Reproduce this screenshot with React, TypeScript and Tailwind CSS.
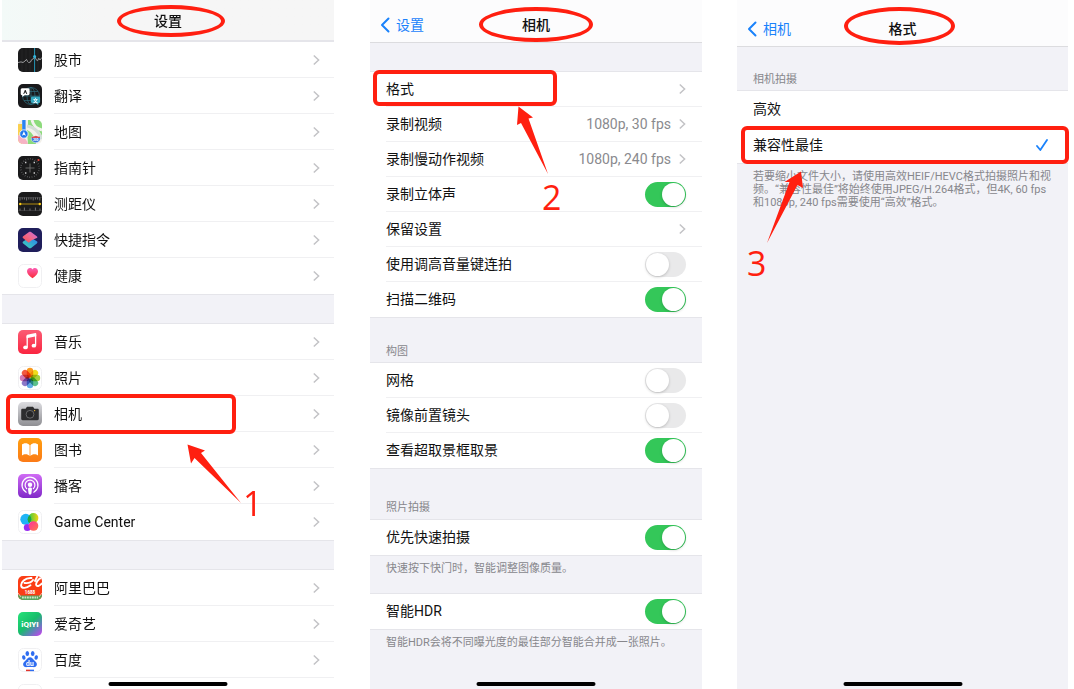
import { ReactNode, useState } from 'react'

interface App {
  name: string
  icon: ReactNode
  marked?: boolean
}

interface Setting {
  name: string
  value?: string
  on?: boolean
  marked?: boolean
}

const Tile = ({ fill, children }: { fill: string; children?: ReactNode }) => (
  <svg viewBox="0 0 24 24" className="size-6 shrink-0 overflow-hidden rounded-[5px]" aria-hidden="true">
    <rect width="24" height="24" fill={fill} />
    {children}
  </svg>
)

const WhiteTile = ({ children }: { children?: ReactNode }) => (
  <svg viewBox="0 0 24 24" className="size-6 shrink-0" aria-hidden="true">
    <rect x=".5" y=".5" width="23" height="23" rx="5" fill="#fff" stroke="#f0f0f2" />
    {children}
  </svg>
)

const StocksIcon = () => (
  <Tile fill="#1b1b1c">
    <path d="M4 0v24M8 0v24M12 0v24M20 0v24" stroke="#2c2c2e" strokeWidth=".6" />
    <path d="M0 14.5l3-.6 2 .6 2-1.5 1.5-1.6 1 2 1.2 1.2 1.8-.6 1.2-2.4 1.6-.8L17 8.5l1 3 1.6 1.2 1.2-2.4L22 12l2-2.6" fill="none" stroke="#b9b9bb" strokeWidth=".8" />
    <path d="M16.6 0v24" stroke="#2596b5" strokeWidth="1" />
    <circle cx="16.6" cy="8.6" r="1.5" fill="#36b5dc" />
  </Tile>
)

const TranslateIcon = () => (
  <Tile fill="#19191b">
    <g fill="none" stroke="#2f6f80" strokeWidth=".7">
      <circle cx="13" cy="12" r="8.5" />
      <ellipse cx="13" cy="12" rx="4" ry="8.5" />
      <path d="M13 3.5v17M4.5 12h17M6 7.5h14M6 16.5h14" />
    </g>
    <path d="M4 4.2h6.2a1.4 1.4 0 011.4 1.4v4.2a1.4 1.4 0 01-1.4 1.4H6.6L4.3 13v-1.8H4a1.3 1.3 0 01-1.3-1.4V5.6A1.4 1.4 0 014 4.2z" fill="#fff" />
    <text x="7.2" y="9.9" textAnchor="middle" fontSize="6" fontWeight="700" fill="#222">A</text>
    <path d="M14.4 12.6h6.3a1.4 1.4 0 011.4 1.4v3.8a1.4 1.4 0 01-1.4 1.4h-.4v2l-2.4-2h-3.5a1.4 1.4 0 01-1.4-1.4V14a1.4 1.4 0 011.4-1.4z" fill="#35a8c0" />
    <text x="17.5" y="18" textAnchor="middle" fontSize="5" fontWeight="700" fill="#fff">文</text>
  </Tile>
)

const MapsIcon = () => (
  <Tile fill="#f2f0ea">
    <path d="M10 0h14v17C22 9 16 6 10 5z" fill="#8ddb7c" />
    <path d="M14 0c1 5 5 9 10 10" fill="none" stroke="#f4f3ef" strokeWidth="3" />
    <path d="M0 4h4v20H0z" fill="#fbd04f" />
    <path d="M0 15c5 1 9 4 10 9H0z" fill="#f6b3c4" />
    <path d="M9 6c7 1 12 6 15 13" fill="none" stroke="#d3dcd6" strokeWidth="3" />
    <path d="M9 10c5 2 8 7 9 14h-8z" fill="#8ddb7c" />
    <path d="M4.2 0h3.4v11H4.2z" fill="#2a82f2" />
    <circle cx="5.9" cy="14" r="4.2" fill="#1f78ee" stroke="#fff" strokeWidth=".8" />
    <path d="M5.9 11.2l2 4.6-2-1-2 1z" fill="#fff" />
    <path d="M14 16.5c1.5.6 2.5 0 3.8-.6 1.3.6 2.3 1.2 3.8.6 1.7 3 .2 5.5-3.8 6.300-4-.8-5.500-3.300-3.800-6.300z" fill="#3c7ae0" stroke="#fff" strokeWidth=".5" />
    <path d="M14 16.400c1.500.6 2.500 0 3.800-.6 1.300.6 2.300 1.200 3.800.6l.5 1.500h-8.600z" fill="#e14a4a" />
    <text x="17.800" y="21.300" textAnchor="middle" fontSize="3" fontWeight="700" fill="#fff">280</text>
  </Tile>
)

const CompassIcon = () => (
  <Tile fill="#1a1a1b">
    <circle cx="12" cy="12" r="9.200" fill="none" stroke="#747476" strokeWidth="1.400" strokeDasharray=".6 1.800" />
    <path d="M12 7.500v9M7.500 12h9" stroke="#6f6f71" strokeWidth=".9" />
    <path d="M7 6.500h1.400M15.600 6.500H17M7 17h1.400M15.600 17H17" stroke="#cfcfd1" strokeWidth="1.400" />
    <circle cx="20.500" cy="4" r="1.100" fill="#f04438" />
  </Tile>
)

const MeasureIcon = () => (
  <Tile fill="#1b1b1c">
    <path d="M0 5.500h24M0 18.500h24" stroke="#4a4a4c" strokeWidth=".6" />
    <path d="M2 5.500v3M4.200 5.500v2M6.400 5.500v2M8.600 5.500v3M10.800 5.500v2M13 5.500v2M15.200 5.500v3M17.400 5.500v2M19.600 5.500v2M21.800 5.500v3M6.400 18.500v-3M12 18.500v-2M17.400 18.500v-3M2 18.500v-2M22 18.500v-2" stroke="#9a9a9c" strokeWidth=".7" />
    <path d="M2 12h20" stroke="#d8a80e" strokeWidth=".8" />
    <circle cx="2.200" cy="12" r="1.200" fill="#ffcf1a" />
    <circle cx="21.800" cy="12" r="1.200" fill="#ffcf1a" />
  </Tile>
)

const ShortcutsIcon = () => (
  <Tile fill="#1f1e5b">
    <defs>
      <linearGradient id="sc-top" x1="0" y1="1" x2="1" y2="0">
        <stop offset="0" stopColor="#f2504f" />
        <stop offset=".5" stopColor="#f0688c" />
        <stop offset="1" stopColor="#c56ae8" />
      </linearGradient>
      <linearGradient id="sc-bottom" x1="0" y1="1" x2="1" y2="0">
        <stop offset="0" stopColor="#3fd6b4" />
        <stop offset="1" stopColor="#2b7cf0" />
      </linearGradient>
    </defs>
    <path d="M12 9l6.800 4.300c.9.600.9 1.500 0 2.100l-5.700 4.500c-.8.600-1.400.600-2.200 0l-5.700-4.400c-.8-.600-.8-1.500 0-2.100z" fill="url(#sc-bottom)" />
    <path d="M11 4L5.200 8.300c-.8.600-.8 1.400 0 2l5.500 4.400 3-2.400 5-2.200c.9-.600.9-1.300 0-1.900L13 4c-.7-.5-1.300-.5-2 0z" fill="url(#sc-top)" />
  </Tile>
)

const HealthIcon = () => (
  <WhiteTile>
    <defs>
      <linearGradient id="heart" x1="0" y1="0" x2="0" y2="1">
        <stop offset="0" stopColor="#fb5fb4" />
        <stop offset="1" stopColor="#fb2b37" />
      </linearGradient>
    </defs>
    <path d="M14.500 14.200C11 11.800 9 9.700 9 7.300 9 5.300 10.300 4 12 4c1 0 1.900.5 2.500 1.400C15.100 4.500 16 4 17 4c1.700 0 3 1.300 3 3.300 0 2.400-2 4.500-5.500 6.900z" fill="url(#heart)" />
  </WhiteTile>
)

const MusicIcon = () => (
  <Tile fill="url(#music)">
    <defs>
      <linearGradient id="music" x1="0" y1="0" x2="0" y2="1">
        <stop offset="0" stopColor="#fb5c74" />
        <stop offset="1" stopColor="#fa2540" />
      </linearGradient>
    </defs>
    <path d="M9.200 6v11.200M17.600 4.500v11" stroke="#fff" strokeWidth="1.300" />
    <path d="M8.550 5.600c0-.5.200-.7.700-.8l8.200-1.700c.5-.1.800.1.800.6v2.600L8.550 8.300z" fill="#fff" />
    <ellipse cx="7.500" cy="17.400" rx="2.300" ry="1.900" fill="#fff" />
    <ellipse cx="15.900" cy="15.700" rx="2.300" ry="1.900" fill="#fff" />
  </Tile>
)

const petals = ['#fb9a1f', '#f0dc1c', '#a5cf3c', '#5cc08c', '#62ace6', '#8b78c8', '#d27ab4', '#f25a40']

const PhotosIcon = () => (
  <WhiteTile>
    <g className="isolate">
      {petals.map((color, i) => (
        <rect key={color} x="8.800" y="1.800" width="6.400" height="9.800" rx="3.200" fill={color} className="mix-blend-multiply" transform={`rotate(${i * 45} 12 12)`} />
      ))}
    </g>
  </WhiteTile>
)

const CameraIcon = () => (
  <Tile fill="url(#camera)">
    <defs>
      <linearGradient id="camera" x1="0" y1="0" x2="0" y2="1">
        <stop offset="0" stopColor="#dcdce0" />
        <stop offset="1" stopColor="#8f8f93" />
      </linearGradient>
    </defs>
    <path d="M4.600 6.800h3l1-1.600c.2-.4.500-.5.900-.5h5c.4 0 .7.100.9.500l1 1.600h3c.9 0 1.400.5 1.400 1.400v8.600c0 .9-.5 1.400-1.400 1.400H4.600c-.9 0-1.400-.5-1.400-1.400V8.200c0-.9.500-1.400 1.400-1.400z" fill="#2d2d2f" />
    <circle cx="12" cy="12.300" r="3.900" fill="#262628" stroke="#77777a" strokeWidth=".8" />
    <circle cx="16.600" cy="8.600" r=".7" fill="#f5b62a" />
  </Tile>
)

const BooksIcon = () => (
  <Tile fill="url(#books)">
    <defs>
      <linearGradient id="books" x1="0" y1="0" x2="0" y2="1">
        <stop offset="0" stopColor="#ff9f0f" />
        <stop offset="1" stopColor="#fb7a17" />
      </linearGradient>
    </defs>
    <path d="M11.600 7.300C10.500 5.700 9 5.200 7.600 5.200 6 5.200 4.600 5.800 4 6.600v10.800c.9-.7 2.200-1.100 3.600-1.100 1.600 0 3.100.5 4 1.600zM12.400 7.300c1.100-1.600 2.600-2.100 4-2.100 1.600 0 3 .6 3.600 1.400v10.800c-.9-.7-2.200-1.100-3.600-1.100-1.600 0-3.100.5-4 1.600z" fill="#fff" />
  </Tile>
)

const PodcastsIcon = () => (
  <Tile fill="url(#podcasts)">
    <defs>
      <linearGradient id="podcasts" x1="0" y1="0" x2="0" y2="1">
        <stop offset="0" stopColor="#d06cf5" />
        <stop offset="1" stopColor="#8028c8" />
      </linearGradient>
    </defs>
    <g fill="none" stroke="#fff" strokeWidth="1.200" strokeLinecap="round">
      <path d="M8.200 18.200a8 8 0 117.600 0" />
      <path d="M8.700 14.700a4.900 4.900 0 116.600 0" />
    </g>
    <circle cx="12" cy="10.800" r="2.200" fill="#fff" />
    <path d="M10 14.800c.2-1.600 3.800-1.600 4 0l-.6 4.700c-.3 1.500-2.500 1.500-2.800 0z" fill="#fff" />
  </Tile>
)

const GameCenterIcon = () => (
  <WhiteTile>
    <defs>
      <linearGradient id="gc-green" x1="0" y1="0" x2="1" y2="0">
        <stop offset="0" stopColor="#35c93c" />
        <stop offset="1" stopColor="#f4d414" />
      </linearGradient>
      <linearGradient id="gc-pink" x1="0" y1="0" x2="1" y2="1">
        <stop offset="0" stopColor="#ff2f9f" />
        <stop offset="1" stopColor="#ff7a45" />
      </linearGradient>
    </defs>
    <circle cx="15.400" cy="8" r="5" fill="url(#gc-green)" />
    <circle cx="7.800" cy="9.300" r="5.500" fill="#1fb4f5" />
    <path d="M11.600 5.300a5.500 5.500 0 010 8 5 5 0 010-8z" fill="#1fa83c" />
    <circle cx="9.300" cy="17.500" r="3.500" fill="#9a2cf0" />
    <circle cx="15.500" cy="16" r="4.800" fill="url(#gc-pink)" />
  </WhiteTile>
)

const AlibabaIcon = () => (
  <Tile fill="#fb3d15">
    <path d="M13.500 2C7 1.500 2.500 6.500 3.200 10c.6 2.900 5 2.400 9.300-.8M6.500 7c3.800.4 7-.8 8.500-3M23.500 2c-2.500 0-6 4.500-5.300 7 .5 1.800 3.300 1.300 5.800-1.500M17 5L19.500 0" fill="none" stroke="#fff" strokeWidth="1.900" strokeLinecap="round" />
    <text x="12" y="17.600" textAnchor="middle" fontSize="4.500" fontWeight="800" fill="#fff">1688</text>
    <path d="M0 18.500l3 1h18l3-1V24H0z" fill="#57a35c" />
    <path d="M0 17l3 4M24 17l-3 4" stroke="#f9b7a4" strokeWidth="1" />
    <path d="M4 21.500h16" stroke="#c9e6c5" strokeWidth="2" strokeDasharray="1.800 .7" />
  </Tile>
)

const IqiyiIcon = () => (
  <Tile fill="url(#iqiyi)">
    <defs>
      <linearGradient id="iqiyi" x1=".1" y1="0" x2="1" y2="1">
        <stop offset="0" stopColor="#25df78" />
        <stop offset=".45" stopColor="#17bd6b" />
        <stop offset=".7" stopColor="#5f82b8" />
        <stop offset="1" stopColor="#d23bf5" />
      </linearGradient>
    </defs>
    <text x="12" y="14.600" textAnchor="middle" fontSize="8" fontWeight="800" fill="#fff">iQIYI</text>
  </Tile>
)

const BaiduIcon = () => (
  <WhiteTile>
    <g fill="#2f6df0">
      <ellipse cx="9.300" cy="5.400" rx="1.800" ry="2.500" />
      <ellipse cx="14.700" cy="5.400" rx="1.800" ry="2.500" />
      <ellipse cx="5.800" cy="9.500" rx="1.700" ry="2.200" transform="rotate(-15 5.800 9.500)" />
      <ellipse cx="18.200" cy="9.500" rx="1.700" ry="2.200" transform="rotate(15 18.200 9.500)" />
      <path d="M12 9.200c2 0 2.700 1.500 3.900 2.800 1.400 1.300 3 2.300 3 4.300 0 2.300-2 3.100-4 2.800-2-.3-3.800-.3-5.800 0s-4-.5-4-2.800c0-2 1.600-3 3-4.300 1.200-1.300 1.900-2.800 3.900-2.800z" />
    </g>
    <text x="12" y="17.500" textAnchor="middle" fontSize="7" fontWeight="700" fill="#fff">du</text>
    <path d="M8 22.400h4" stroke="#e0362f" strokeWidth="1.500" />
    <path d="M12 22.400h4" stroke="#2f6df0" strokeWidth="1.500" />
  </WhiteTile>
)

const appGroups: App[][] = [
  [
    { name: '股市', icon: <StocksIcon /> },
    { name: '翻译', icon: <TranslateIcon /> },
    { name: '地图', icon: <MapsIcon /> },
    { name: '指南针', icon: <CompassIcon /> },
    { name: '测距仪', icon: <MeasureIcon /> },
    { name: '快捷指令', icon: <ShortcutsIcon /> },
    { name: '健康', icon: <HealthIcon /> },
  ],
  [
    { name: '音乐', icon: <MusicIcon /> },
    { name: '照片', icon: <PhotosIcon /> },
    { name: '相机', icon: <CameraIcon />, marked: true },
    { name: '图书', icon: <BooksIcon /> },
    { name: '播客', icon: <PodcastsIcon /> },
    { name: 'Game Center', icon: <GameCenterIcon /> },
  ],
  [
    { name: '阿里巴巴', icon: <AlibabaIcon /> },
    { name: '爱奇艺', icon: <IqiyiIcon /> },
    { name: '百度', icon: <BaiduIcon /> },
    { name: '', icon: <WhiteTile /> },
  ],
]

const videoSettings: Setting[] = [
  { name: '格式', marked: true },
  { name: '录制视频', value: '1080p, 30 fps' },
  { name: '录制慢动作视频', value: '1080p, 240 fps' },
  { name: '录制立体声', on: true },
  { name: '保留设置' },
  { name: '使用调高音量键连拍', on: false },
  { name: '扫描二维码', on: true },
]

const frameSettings: Setting[] = [
  { name: '网格', on: false },
  { name: '镜像前置镜头', on: false },
  { name: '查看超取景框取景', on: true },
]

const Chevron = () => (
  <svg viewBox="0 0 7 12" className="h-3 w-[7px] shrink-0" fill="none" stroke="#c3c3c6" strokeWidth="1.500" aria-hidden="true">
    <path d="M.8 1.500L5.600 6 .8 10.500" />
  </svg>
)

const HomeBar = () => (
  <div className="absolute bottom-[3px] left-1/2 h-1 w-[119px] -translate-x-1/2 rounded-full bg-black" />
)

// Ellipse rouge autour du titre
const Ring = ({ className }: { className: string }) => (
  <span className={`absolute rounded-[50%] border-4 border-[#ff1f10] ${className}`} />
)

// Cadre rouge autour d'une ligne
const Frame = ({ className }: { className: string }) => (
  <span className={`pointer-events-none absolute z-10 rounded-md border-4 border-[#ff1f10] ${className}`} />
)

const Arrow = ({ points, className }: { points: string; className: string }) => (
  <svg className={`pointer-events-none absolute z-10 overflow-visible ${className}`} fill="#ff1f10" aria-hidden="true">
    <polygon points={points} />
  </svg>
)

const Step = ({ className, children }: { className: string; children: ReactNode }) => (
  <span className={`absolute z-10 font-['Open_Sans','Noto_Sans',sans-serif] text-[34px] leading-8 text-[#ff1f10] ${className}`}>
    {children}
  </span>
)

const BackLink = ({ children }: { children: ReactNode }) => (
  <a href="#" className="absolute left-2.5 flex items-center gap-1.5 text-sm leading-5 text-[#1a82fb]">
    <svg viewBox="0 0 10 16" className="h-4 w-2.5" fill="none" stroke="currentColor" strokeWidth="2" strokeLinecap="round" strokeLinejoin="round" aria-hidden="true">
      <path d="M8.500 1.500L2 8l6.500 6.500" />
    </svg>
    {children}
  </a>
)

const Group = ({ children }: { children: ReactNode }) => (
  <div className="border-y border-[#e5e5ea] bg-white">{children}</div>
)

const Note = ({ children }: { children: ReactNode }) => (
  <p className="pt-1.5 pr-3 pl-4 text-[11px] leading-[13px] text-[#87878c]">{children}</p>
)

function SettingRow({ setting }: { setting: Setting }) {
  const [on, setOn] = useState(setting.on)
  const inner = 'flex h-[35px] flex-1 items-center gap-2 border-b border-[#f0f0f2] pr-4 group-last:border-transparent'

  if (on !== undefined) {
    return (
      <label className="group flex pl-4">
        <span className={inner}>
          <span className="flex-1">{setting.name}</span>
          <input
            type="checkbox"
            role="switch"
            checked={on}
            onChange={(e) => setOn(e.target.checked)}
            className="h-[25px] w-[41px] appearance-none rounded-full bg-[#e9e9ea] p-px before:block before:size-[23px] before:rounded-full before:bg-white before:shadow-[0_1px_3px_rgba(0,0,0,0.2)] checked:bg-[#34c759] checked:before:translate-x-4"
          />
        </span>
      </label>
    )
  }

  return (
    <a href="#" className="group relative flex pl-4">
      <span className={inner}>
        <span className="flex-1">{setting.name}</span>
        {setting.value && <span className="text-[#8a8a8e]">{setting.value}</span>}
        <Chevron />
      </span>
      {setting.marked && <Frame className="-top-0.5 left-[3px] h-9 w-[184px]" />}
    </a>
  )
}

export default function App() {
  const [format, setFormat] = useState('兼容性最佳')

  return (
    <main className="grid h-screen grid-cols-[332fr_333fr_331fr] grid-rows-[minmax(0,1fr)] overflow-hidden bg-white pr-1.5 pl-0.5 font-['Roboto','Noto_Sans_CJK_SC',sans-serif] text-sm text-[#111] gap-x-[35px]">
      {/* Liste des applications */}
      <section className="relative">
        <header className="relative flex h-[41px] items-center justify-center border-b border-[#e5e5ea] bg-linear-to-r from-[#f3faf8] via-[#f6f6f6] via-30% to-[#f6f6f6] pt-0.5">
          <h1 className="font-medium">设置</h1>
          <Ring className="top-[5px] left-[115px] h-8 w-[108px]" />
        </header>
        <div className="flex flex-col gap-7 bg-[#f2f2f7]">
          {appGroups.map((group, i) => (
            <Group key={i}>
              {group.map((app) => (
                <a key={app.name} href="#" className="group relative flex h-9 items-center gap-3 pl-4">
                  {app.icon}
                  <span className="flex h-full flex-1 items-center justify-between border-b border-[#f0f0f2] pr-3.5 group-last:border-transparent">
                    {app.name}
                    <Chevron />
                  </span>
                  {app.marked && <Frame className="-top-0.5 left-1 h-10 w-[230px]" />}
                </a>
              ))}
            </Group>
          ))}
        </div>
        <Arrow className="top-[444px] left-[185px] h-[60px] w-[56px]" points="0.500,0.500 18,6.500 14,9 54,59 7.500,14 4,19.500" />
        <Step className="top-[487px] left-[241px]">1</Step>
        <HomeBar />
      </section>

      {/* Réglages de l'appareil photo */}
      <section className="relative border-l border-white bg-[#f2f2f7]">
        <header className="relative flex h-[43px] items-center justify-center border-b border-[#dcdcdf] bg-[#fcfcfd] pt-2">
          <BackLink>设置</BackLink>
          <h1 className="font-medium">相机</h1>
          <Ring className="top-[7px] left-1/2 h-[35px] w-[114px] -translate-x-1/2" />
        </header>
        <div className="pt-7">
          <Group>
            {videoSettings.map((setting) => (
              <SettingRow key={setting.name} setting={setting} />
            ))}
          </Group>
        </div>
        <h2 className="px-4 pt-[27px] pb-1 text-[11px] leading-[13px] text-[#87878c]">构图</h2>
        <Group>
          {frameSettings.map((setting) => (
            <SettingRow key={setting.name} setting={setting} />
          ))}
        </Group>
        <h2 className="px-4 pt-8 pb-[5px] text-[11px] leading-[13px] text-[#87878c]">照片拍摄</h2>
        <Group>
          <SettingRow setting={{ name: '优先快速拍摄', on: true }} />
        </Group>
        <div className="pb-[18px]">
          <Note>快速按下快门时，智能调整图像质量。</Note>
        </div>
        <Group>
          <SettingRow setting={{ name: '智能HDR', on: true }} />
        </Group>
        <Note>智能HDR会将不同曝光度的最佳部分智能合并成一张照片。</Note>
        <Arrow className="top-[106px] left-[147px] h-[68px] w-8" points="1.500,0.500 16,11.500 11.500,12.500 31,68 4,17 0,19" />
        <Step className="top-[181px] left-[172px]">2</Step>
        <HomeBar />
      </section>

      {/* Choix du format */}
      <section className="relative bg-[#f2f2f7]">
        <header className="relative flex h-[47px] items-center justify-center border-b border-[#dcdcdf] bg-[#fcfcfd] pt-3">
          <BackLink>相机</BackLink>
          <h1 className="font-medium">格式</h1>
          <Ring className="top-[7px] left-[107px] h-[38px] w-[111px]" />
        </header>
        <h2 className="px-4 pt-[26px] pb-1 text-[11px] leading-[13px] text-[#87878c]">相机拍摄</h2>
        <Group>
          {['高效', '兼容性最佳'].map((name) => (
            <label key={name} className="relative flex h-9 items-center justify-between pr-5 pl-4">
              {name}
              <input
                type="radio"
                name="format"
                value={name}
                checked={format === name}
                onChange={() => setFormat(name)}
                className="peer sr-only"
              />
              <svg viewBox="0 0 12 12" className="invisible size-3 peer-checked:visible" fill="none" stroke="#1a82fb" strokeWidth="1.800" strokeLinecap="round" strokeLinejoin="round" aria-hidden="true">
                <path d="M1 7l3.300 4L11 1" />
              </svg>
              {name === '兼容性最佳' && <Frame className="-right-px left-1 h-[38px]" />}
            </label>
          ))}
        </Group>
        <Note>
          若要缩小文件大小，请使用高效HEIF/HEVC格式拍摄照片和视频。“兼容性最佳”将始终使用JPEG/H.264格式，但4K, 60 fps和1080p, 240 fps需要使用“高效”格式。
        </Note>
        <Arrow className="top-[171px] left-[29px] h-[72px] w-10" points="35,0.500 37,17 31.500,14 1,72 23.500,11 18.500,11" />
        <Step className="top-[247px] left-[10px]">3</Step>
        <HomeBar />
      </section>
    </main>
  )
}
